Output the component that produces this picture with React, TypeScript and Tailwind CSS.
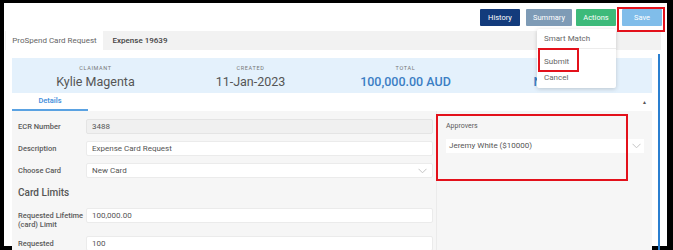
import React from 'react';

function Chevron() {
  return (
    <svg width="9" height="6" viewBox="0 0 9 6" className="shrink-0">
      <polyline points="0.5,0.8 4.5,4.8 8.5,0.8" fill="none" stroke="#c4c4c4" strokeWidth="1" />
    </svg>
  );
}

function Field({ label, value, disabled, select, twoLine }: { label: string; value: string; disabled?: boolean; select?: boolean; twoLine?: boolean }) {
  return (
    <div className="flex items-start">
      <div className={`w-[68px] shrink-0 text-[7.5px] font-medium text-[#5a5a5a] ${twoLine ? 'pt-[3px] leading-[9px]' : 'leading-[15px]'}`}>
        {label}
      </div>
      <div
        className={`flex h-[15px] flex-1 items-center justify-between rounded-[2px] border px-[5px] text-[8px] text-[#555] ${
          disabled ? 'border-[#e4e4e4] bg-[#f0f0f0]' : 'border-[#ebebeb] bg-white'
        }`}
      >
        <span>{value}</span>
        {select && <Chevron />}
      </div>
    </div>
  );
}

export default function App() {
  const stats = [
    { cap: 'CLAIMANT', val: 'Kylie Magenta', blue: false },
    { cap: 'CREATED', val: '11-Jan-2023', blue: false },
    { cap: 'TOTAL', val: '100,000.00 AUD', blue: true },
    { cap: 'STATUS', val: 'New Card', blue: true },
  ];

  return (
    <div className="relative h-[250px] w-[673px] overflow-hidden bg-black font-['Roboto',sans-serif]">
      <div className="ml-[4px] mt-[3px] flex h-[243px] w-[663px] flex-col bg-white">
        {/* action buttons */}
        <div className="flex h-[28px] shrink-0 items-start justify-end pr-[5px] pt-[6px]">
          <button className="h-[17px] w-[40px] rounded-[1px] bg-[#133b7c] text-[7.5px] text-white">History</button>
          <button className="ml-[6px] h-[17px] w-[46px] rounded-[1px] bg-[#7e9bb6] text-[7.5px] text-white">Summary</button>
          <button className="ml-[4px] h-[17px] w-[40px] rounded-[1px] bg-[#3dba7a] text-[7.5px] text-white">Actions</button>
          <button className="ml-[6px] h-[17px] w-[40px] rounded-[1px] bg-[#80bdea] text-[7.5px] text-white">Save</button>
        </div>

        {/* tabs */}
        <div className="ml-[1px] flex h-[19px] w-[656px] shrink-0 bg-[#f2f2f2]">
          <div className="ml-[1px] flex w-[97px] items-center justify-center bg-white text-[8px] text-[#666]">ProSpend Card Request</div>
          <div className="flex w-[74px] items-center justify-center text-[8px] font-medium text-[#444]">Expense 19639</div>
        </div>

        <div className="flex flex-1 pl-[8px]">
          <div className="flex w-[640px] flex-col pt-[8px]">
            {/* summary banner */}
            <div className="grid h-[35px] shrink-0 grid-cols-[155px_155px_155px_155px] bg-[#e4f1fc] pl-[6px]">
              {stats.map(s => (
                <div key={s.cap} className="flex flex-col items-center pt-[6px]">
                  <div className="text-[5.5px] leading-[8px] tracking-[0.12em] text-[#777]">{s.cap}</div>
                  <div className={`mt-[2px] text-[12.5px] leading-[15px] ${s.blue ? 'font-medium text-[#3b7ec4]' : 'text-[#555]'}`}>{s.val}</div>
                </div>
              ))}
            </div>

            {/* details tab */}
            <div className="flex h-[18px] shrink-0 items-stretch justify-between">
              <div className="flex w-[76px] items-center justify-center border-b-2 border-[#5aa2e2] text-[7.5px] font-semibold text-[#4a92dc]">Details</div>
              <div className="mr-[5px] flex items-center pt-[2px] text-[5px] text-[#555]">▲</div>
            </div>

            {/* form */}
            <div className="flex flex-1 bg-[#f6f6f6]">
              <div className="flex w-[424px] flex-col pl-[6px] pr-[3px] pt-[8px]">
                <div className="flex flex-col gap-[7px]">
                  <Field label="ECR Number" value="3488" disabled />
                  <Field label="Description" value="Expense Card Request" />
                  <Field label="Choose Card" value="New Card" select />
                </div>
                <div className="mt-[9px] text-[10px] font-medium leading-[12px] text-[#555]">Card Limits</div>
                <div className="mt-[9px] flex flex-col gap-[7px]">
                  <Field label="Requested Lifetime (card) Limit" value="100,000.00" twoLine />
                  <Field label="Requested Transaction Limit" value="100" twoLine />
                </div>
              </div>
              <div className="flex flex-1 flex-col border-l border-[#ebebeb] pl-[9px] pr-[8px] pt-[11px]">
                <div className="text-[7px] leading-[8px] text-[#5a5a5a]">Approvers</div>
                <div className="mt-[9px] flex h-[14px] items-center justify-between bg-white px-[3px] text-[8px] text-[#555]">
                  <span>Jeremy White ($10000)</span>
                  <Chevron />
                </div>
              </div>
            </div>
          </div>
          <div className="ml-[6px] mt-[4px] w-[2px] bg-[#2a7fd0]" />
        </div>
      </div>

      {/* actions dropdown */}
      <div className="absolute left-[537px] top-[29px] h-[59px] w-[79px] rounded-[2px] bg-white text-[8px] text-[#666] shadow-[0_1px_4px_rgba(0,0,0,0.18)]">
        <div className="flex h-[20px] items-center border-b border-[#ececec] pl-[7px]">Smart Match</div>
        <div className="pl-[7px] pt-[7px] leading-[12px]">Submit</div>
        <div className="mt-[4px] pl-[7px] leading-[12px]">Cancel</div>
      </div>

      {/* highlight boxes */}
      <div className="absolute left-[617px] top-[7px] h-[25px] w-[48px] border-2 border-[#e3111b]" />
      <div className="absolute left-[538px] top-[48px] h-[24px] w-[41px] border-2 border-[#e3111b]" />
      <div className="absolute left-[436px] top-[114px] h-[67px] w-[192px] border-2 border-[#e3111b]" />
    </div>
  );
}
